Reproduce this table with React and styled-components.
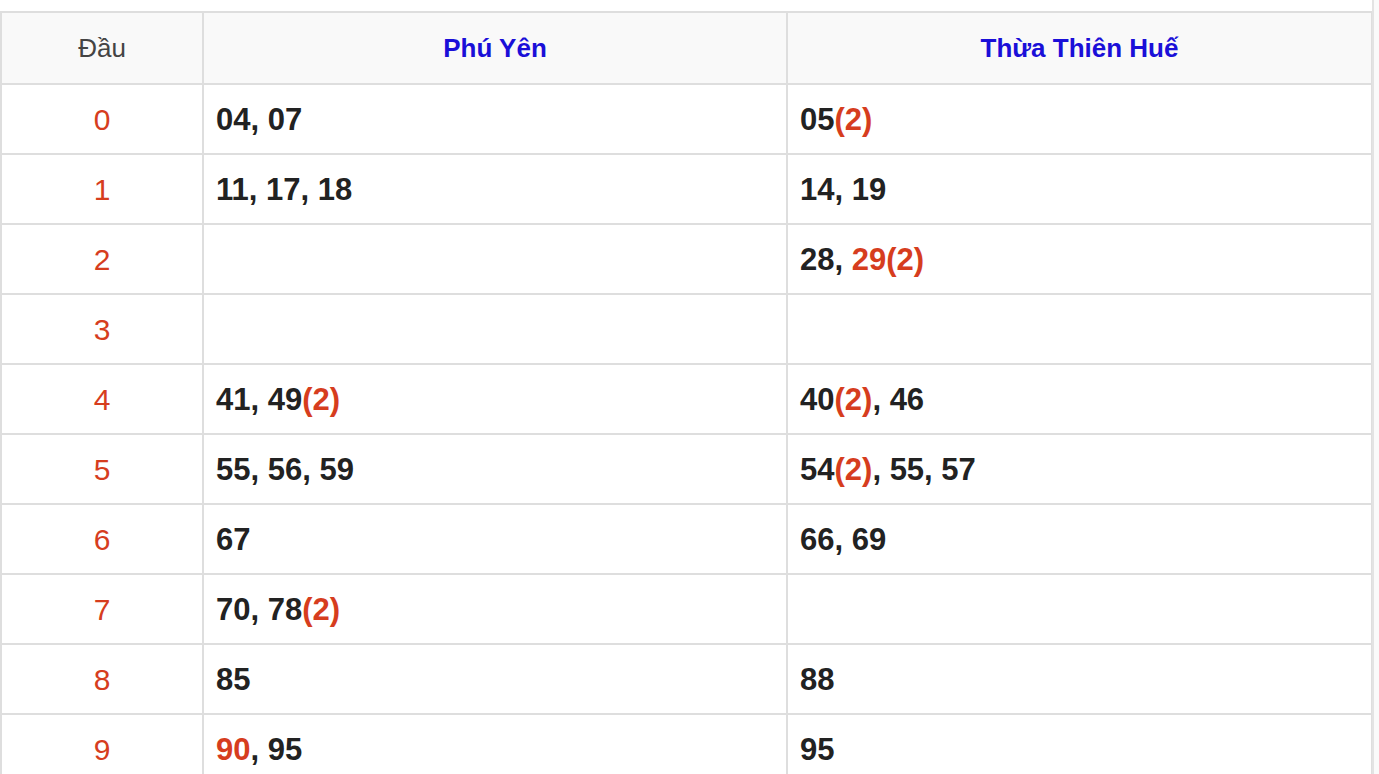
import React from "react";
import styled, { createGlobalStyle } from "styled-components";

const GlobalStyle = createGlobalStyle`
  html, body {
    margin: 0;
    padding: 0;
    background: #ffffff;
    font-family: "Liberation Sans", Arial, Helvetica, sans-serif;
  }
`;

const PROVINCES = ["Phú Yên", "Thừa Thiên Huế"];

// each number: [value, count, highlighted]
const ROWS = [
  [[["04"], ["07"]], [["05", 2]]],
  [[["11"], ["17"], ["18"]], [["14"], ["19"]]],
  [[], [["28"], ["29", 2, true]]],
  [[], []],
  [[["41"], ["49", 2]], [["40", 2], ["46"]]],
  [[["55"], ["56"], ["59"]], [["54", 2], ["55"], ["57"]]],
  [[["67"]], [["66"], ["69"]]],
  [[["70"], ["78", 2]], []],
  [[["85"]], [["88"]]],
  [[["90", 1, true], ["95"]], [["95"]]],
];

export default function App() {
  return (
    <>
      <GlobalStyle />
      <Page>
        <Main>
          <Table>
            <colgroup>
              <col style={{ width: 202 }} />
              <col style={{ width: 584 }} />
              <col style={{ width: 585 }} />
            </colgroup>
            <thead>
              <tr>
                <HeadCell>Đầu</HeadCell>
                {PROVINCES.map((p) => (
                  <HeadCell key={p} $province>
                    {p}
                  </HeadCell>
                ))}
              </tr>
            </thead>
            <tbody>
              {ROWS.map((cols, head) => (
                <tr key={head}>
                  <HeadNum>{head}</HeadNum>
                  {cols.map((nums, ci) => (
                    <NumCell key={ci}>
                      {nums.map(([value, count, hot], i) => (
                        <React.Fragment key={value}>
                          {i > 0 && ", "}
                          {hot ? <Red>{value}</Red> : value}
                          {count > 1 && <Red>({count})</Red>}
                        </React.Fragment>
                      ))}
                    </NumCell>
                  ))}
                </tr>
              ))}
            </tbody>
          </Table>
        </Main>
        <SideStrip />
      </Page>
    </>
  );
}

const Page = styled.div`
  display: flex;
  width: 1379px;
  height: 774px;
  overflow: hidden;
`;

const Main = styled.div`
  width: 1372px;
  padding-top: 11px;
  flex: none;
`;

const SideStrip = styled.div`
  flex: 1;
  border-left: 2px solid #e3e3e3;
  background: #fafafa;
`;

const Table = styled.table`
  width: 1371px;
  table-layout: fixed;
  border-collapse: collapse;

  td,
  th {
    border: 2px solid #dedede;
  }
`;

const HeadCell = styled.th`
  height: 70px;
  padding: 0;
  background: #f9f9f9;
  text-align: center;
  vertical-align: middle;
  font-size: 26px;
  font-weight: ${(p) => (p.$province ? 700 : 400)};
  color: ${(p) => (p.$province ? "#1a0fd8" : "#444444")};
`;

const HeadNum = styled.td`
  height: 66px;
  padding: 2px 0 0;
  text-align: center;
  vertical-align: middle;
  font-size: 30px;
  color: #d63d1e;
`;

const NumCell = styled.td`
  padding: 2px 12px 0;
  vertical-align: middle;
  font-size: 31px;
  font-weight: 700;
  color: #222222;
  white-space: nowrap;
`;

const Red = styled.span`
  color: #d63d1e;
`;
